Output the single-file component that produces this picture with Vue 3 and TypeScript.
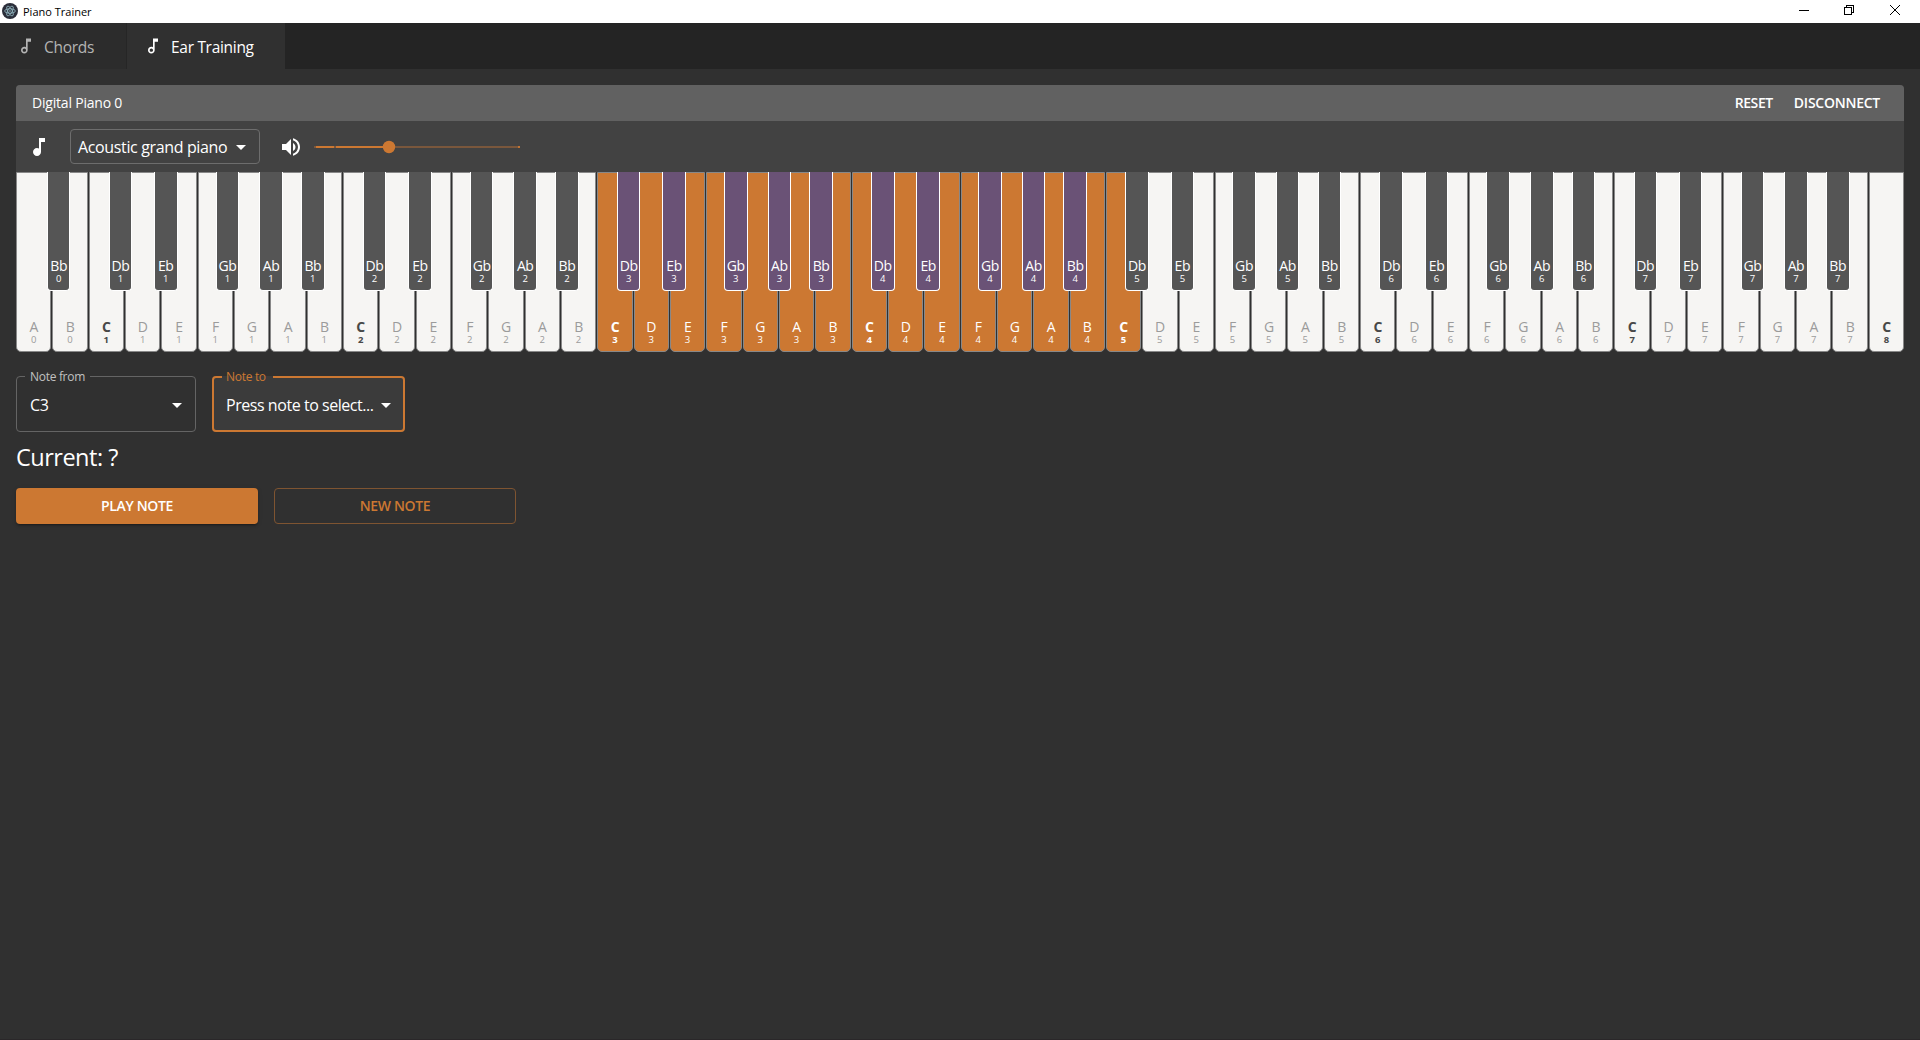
<script setup lang="ts">
interface NaturalKey { name: string; octave: number; active: boolean }
interface FlatKey extends NaturalKey { left: number }

const NATURAL_COUNT = 52
const naturalNames = ['A', 'B', 'C', 'D', 'E', 'F', 'G']
const flats = [
  { name: 'Db', offset: 0.55 },
  { name: 'Eb', offset: 1.8 },
  { name: 'Gb', offset: 3.5 },
  { name: 'Ab', offset: 4.7 },
  { name: 'Bb', offset: 5.85 },
]

const naturals: NaturalKey[] = Array.from({ length: NATURAL_COUNT }, (_, i) => ({
  name: naturalNames[i % 7],
  octave: Math.floor((i + 5) / 7),
  active: i >= 16 && i <= 30,
}))

const flatKeys: FlatKey[] = []
for (let octave = 0; octave <= 7; octave++) {
  for (const flat of flats) {
    const position = octave * 7 - 5 + flat.offset
    if (position < 0) continue
    flatKeys.push({
      name: flat.name,
      octave,
      active: octave === 3 || octave === 4,
      left: (position / NATURAL_COUNT) * 100,
    })
  }
}
</script>

<template>
  <div class="app">
    <header class="titlebar">
      <svg class="logo" viewBox="0 0 16 16">
        <circle cx="8" cy="8" r="8" fill="#2b2e3a" />
        <g fill="none" stroke="#9cc3cd" stroke-width=".75">
          <ellipse cx="8" cy="8" rx="5.4" ry="2.2" />
          <ellipse cx="8" cy="8" rx="5.4" ry="2.2" transform="rotate(60 8 8)" />
          <ellipse cx="8" cy="8" rx="5.4" ry="2.2" transform="rotate(120 8 8)" />
        </g>
        <circle cx="8" cy="8" r=".8" fill="#9cc3cd" />
      </svg>
      <span class="app-name">Piano Trainer</span>
      <div class="window-buttons">
        <svg viewBox="0 0 10 10" shape-rendering="crispEdges"><path d="M0 5h10v1H0z" fill="#000" /></svg>
        <svg viewBox="0 0 10 10" shape-rendering="crispEdges"><path d="M.5 2.5h7v7h-7zM2.5 2.5v-2h7v7h-2" fill="none" stroke="#000" /></svg>
        <svg class="close" viewBox="0 0 10 10"><path d="M0 0l10 10M10 0L0 10" fill="none" stroke="#000" /></svg>
      </div>
    </header>

    <nav class="tabs">
      <div class="tab first">
        <svg viewBox="0 0 24 24"><path d="M12 3l.01 10.55c-.59-.34-1.27-.55-2-.55C7.79 13 6 14.79 6 17s1.79 4 4.01 4S14 19.21 14 17V7h4V3h-6zm-1.99 16c-1.1 0-2-.9-2-2s.9-2 2-2 2 .9 2 2-.9 2-2 2z" /></svg>
        <span>Chords</span>
      </div>
      <div class="tab current">
        <svg viewBox="0 0 24 24"><path d="M12 3l.01 10.55c-.59-.34-1.27-.55-2-.55C7.79 13 6 14.79 6 17s1.79 4 4.01 4S14 19.21 14 17V7h4V3h-6zm-1.99 16c-1.1 0-2-.9-2-2s.9-2 2-2 2 .9 2 2-.9 2-2 2z" /></svg>
        <span>Ear Training</span>
      </div>
    </nav>

    <main>
      <section class="panel">
        <div class="device">
          <span class="device-name">Digital Piano 0</span>
          <button class="reset">RESET</button>
          <button class="disconnect">DISCONNECT</button>
        </div>
        <div class="controls">
          <svg class="icon" viewBox="0 0 24 24"><path d="M12 3v10.55c-.59-.34-1.27-.55-2-.55-2.21 0-4 1.79-4 4s1.79 4 4 4 4-1.79 4-4V7h4V3h-6z" /></svg>
          <div class="instrument">
            <span>Acoustic grand piano</span>
            <svg class="icon" viewBox="0 0 24 24"><path d="M7 10l5 5 5-5z" /></svg>
          </div>
          <svg class="icon volume" viewBox="0 0 24 24"><path d="M3 9v6h4l5 5V4L7 9H3zm13.5 3c0-1.77-1.02-3.29-2.5-4.03v8.05c1.48-.73 2.5-2.25 2.5-4.02zM14 3.23v2.06c2.89.86 5 3.54 5 6.71s-2.11 5.85-5 6.71v2.06c4.01-.91 7-4.49 7-8.77s-2.99-7.86-7-8.77z" /></svg>
          <svg class="slider" viewBox="0 0 206 12">
            <path d="M0 5h206v2H0z" fill="#7a573c" />
            <path d="M2 5h73v2H2z" fill="#cc7832" />
            <path d="M0 5h2v2H0zM20 5h2v2h-2z" fill="#7a573c" />
            <path d="M204 5h2v2h-2z" fill="#c17434" />
            <circle cx="75" cy="6" r="6.2" fill="#cc7832" />
          </svg>
        </div>
      </section>

      <div class="keyboard">
        <div v-for="(key, i) in naturals" :key="i" class="natural" :class="{ active: key.active, tonic: key.name === 'C' }">
          <span class="name">{{ key.name }}</span>
          <span class="octave">{{ key.octave }}</span>
        </div>
        <div v-for="key in flatKeys" :key="key.name + key.octave" class="flat" :class="{ active: key.active }" :style="{ left: key.left + '%' }">
          <span class="name">{{ key.name }}</span>
          <span class="octave">{{ key.octave }}</span>
        </div>
      </div>

      <div class="fields">
        <fieldset class="field from">
          <legend>Note from</legend>
          <div class="value">
            <span>C3</span>
            <svg class="icon" viewBox="0 0 24 24"><path d="M7 10l5 5 5-5z" /></svg>
          </div>
        </fieldset>
        <fieldset class="field to">
          <legend>Note to</legend>
          <div class="value">
            <span>Press note to select...</span>
            <svg class="icon" viewBox="0 0 24 24"><path d="M7 10l5 5 5-5z" /></svg>
          </div>
        </fieldset>
      </div>

      <h1>Current: ?</h1>

      <div class="actions">
        <button class="play">PLAY NOTE</button>
        <button class="new">NEW NOTE</button>
      </div>
    </main>
  </div>
</template>

<style>
body { margin: 0; background: #303030; }
</style>

<style scoped>
* { box-sizing: border-box; }
.app { height: 1040px; overflow: hidden; background: #303030; border-bottom: 1px solid #2a2729; color: #fff; font-family: "Open Sans", "Noto Sans", sans-serif; white-space: nowrap; }
button { border: 0; background: none; color: #fff; font-family: inherit; font-weight: 600; padding: 0; white-space: nowrap; }
svg { display: block; flex: none; }
.icon { width: 24px; height: 24px; fill: #fff; }

.titlebar { height: 23px; background: #fff; color: #000; display: flex; align-items: center; padding: 0 10px 0 2px; }
.logo { width: 16px; height: 16px; margin-bottom: 1px; }
.app-name { font-size: 11px; margin-left: 5px; line-height: 20px; }
.window-buttons { margin-left: auto; display: flex; gap: 35px; margin-right: 10px; margin-bottom: 3px; }
.window-buttons svg { width: 10px; height: 10px; }
.window-buttons .close { margin-left: 1px; }

.tabs { height: 46px; background: #242424; display: flex; }
.tab { display: flex; align-items: center; padding-left: 16px; background: #2c2c2c; color: #b4b4b4; font-size: 15.5px; letter-spacing: -.3px; }
.tab svg { width: 20px; height: 20px; fill: currentColor; }
.tab span { margin: 1px 0 0 8px; line-height: 22px; }
.tab.first { width: 127px; border-right: 1px solid #262626; }
.tab.current { width: 158px; background: #303030; color: #fff; }

main { padding: 16px; }
.panel { background: #424242; border-radius: 4px 4px 0 0; overflow: hidden; }
.device { height: 36px; background: #616161; display: flex; align-items: center; padding: 0 24px 2px 16px; font-size: 14px; }
.device-name { letter-spacing: -.2px; margin-right: auto; }
.reset, .disconnect { font-size: 14px; }
.reset { margin-right: 21px; letter-spacing: -.4px; }
.disconnect { letter-spacing: -.25px; }
.controls { height: 51px; display: flex; align-items: center; padding-left: 11px; }
.instrument { width: 190px; height: 35px; margin-left: 19px; border: 1px solid #6d6d6d; border-radius: 4px; display: flex; align-items: center; padding-left: 7px; font-size: 16px; letter-spacing: -.36px; }
.instrument span { width: 151px; }
.volume { margin-left: 19px; }
.slider { width: 206px; height: 12px; margin-left: 11px; overflow: visible; }

.keyboard { position: relative; height: 180px; display: flex; gap: 1px; }
.natural, .flat { display: flex; flex-direction: column; justify-content: flex-end; align-items: center; padding-bottom: 7px; font-size: 14px; }
.name { line-height: 15px; margin-bottom: 1px; letter-spacing: -.4px; }
.octave { font-size: 9.5px; line-height: 9px; }
.natural { flex: 1 1 0; min-width: 0; background: #f6f5f3; border: 1px solid #888; border-radius: 0 0 5px 5px; color: #9b9b9b; }
.natural.tonic { color: #484848; font-weight: 700; }
.natural.active { background: #cc7832; color: #fff; }
.flat { position: absolute; top: 0; width: 1.25%; height: 119px; background: #555; border: 1px solid #fff; border-top: 0; border-radius: 0 0 4px 4px; color: #fff; }
.flat.active { background: #6a5276; }

.fields { display: flex; gap: 16px; margin-top: 16px; align-items: flex-start; }
.field { margin: 0; height: 64px; min-width: 0; border: 1px solid #646464; border-radius: 4px; padding: 0; }
.field legend { width: 65px; height: 17px; line-height: 17px; margin-left: 8px; padding: 0 0 0 5px; font-size: 12px; letter-spacing: -.3px; color: #c1c1c1; }
.value { height: 40px; display: flex; align-items: center; justify-content: space-between; font-size: 16px; letter-spacing: -.45px; }
.from { width: 180px; }
.from .value { padding: 0 6px 0 13px; }
.to { width: 193px; border: 2px solid #cc7832; background: #3b3b3b; }
.to legend { width: 51px; padding-left: 4px; color: #cc7832; }
.to .value { padding: 0 5px 0 12px; }

h1 { margin: 9px 0 0; font-size: 23.5px; line-height: 32px; font-weight: 400; letter-spacing: -.5px; }
.actions { display: flex; gap: 16px; margin-top: 15px; }
.actions button { width: 242px; height: 36px; padding-bottom: 2px; border-radius: 4px; font-size: 14px; letter-spacing: -.35px; }
.actions .play { background: #cc7832; box-shadow: 0 3px 1px -2px rgba(0,0,0,.2), 0 2px 2px rgba(0,0,0,.14), 0 1px 5px rgba(0,0,0,.12); }
.actions .new { border: 1px solid #7e5431; color: #cc7832; }
</style>
